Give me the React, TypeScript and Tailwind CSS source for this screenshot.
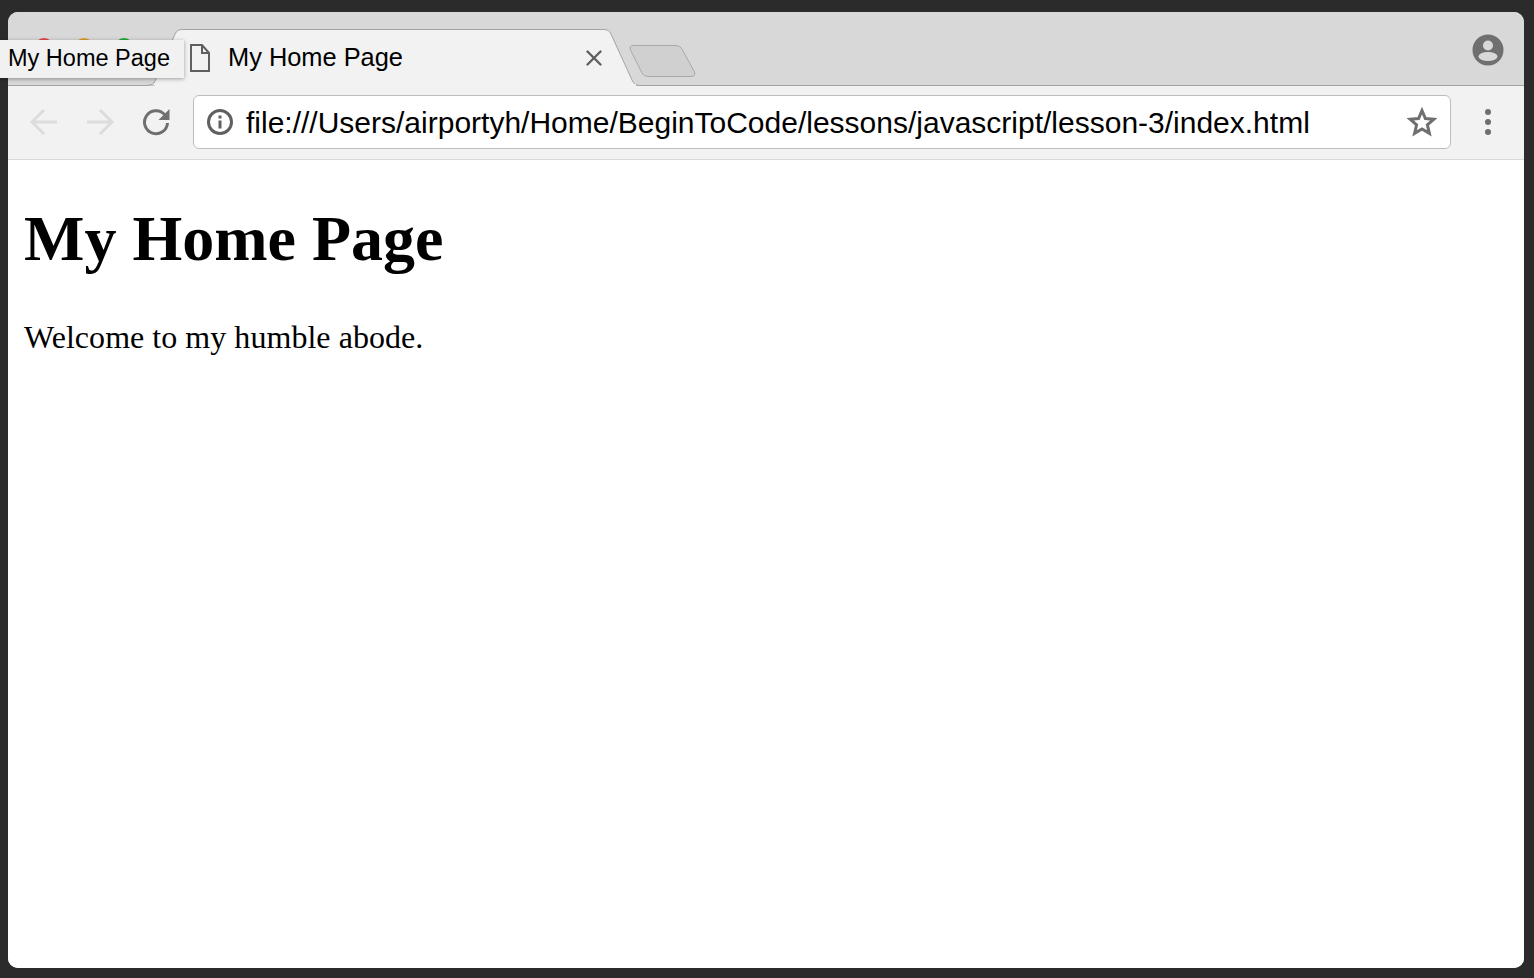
import { X } from "lucide-react";

function TabShape() {
  return (
    <svg className="absolute left-[131px] top-[0px]" width="520" height="74" viewBox="0 0 520 74">
      <path
        d="M8 73.5 L13 72.5 Q15 72 16 69 L36 22 Q38 17.5 43 17.5 L465 17.5 Q470 17.5 472 22 L493 68 Q495 73.5 501 73.5"
        fill="#f2f2f2"
        stroke="#a3a3a3"
        strokeWidth="1"
      />
      <path d="M16 74 L497 74 L497 72 L16 72 Z" fill="#f2f2f2" />
    </svg>
  );
}

function NewTabShape() {
  return (
    <svg className="absolute left-[620px] top-[32px]" width="70" height="34" viewBox="0 0 70 34">
      <path
        d="M5 1.5 L48 1.5 Q52 1.5 54 5 L66.5 28 Q68 32.5 63 32.5 L20 32.5 Q16 32.5 14 29 L2.5 6 Q1 1.5 5 1.5 Z"
        fill="#d0d0d0"
        stroke="#a8a8a8"
        strokeWidth="1"
      />
    </svg>
  );
}

function FileIcon() {
  return (
    <svg width="20" height="28" viewBox="0 0 20 28" fill="none" stroke="#5f5f5f" strokeWidth="2">
      <path d="M1 1 H12 L19 9 V27 H1 Z" />
      <path d="M12 1 V9 H19" />
    </svg>
  );
}

function ProfileIcon() {
  return (
    <svg width="32" height="32" viewBox="0 0 32 32">
      <circle cx="16" cy="16" r="15.5" fill="#6f6f6f" />
      <circle cx="16" cy="11.5" r="5" fill="#d8d8d8" />
      <ellipse cx="16" cy="22.5" rx="9.5" ry="4.5" fill="#d8d8d8" />
    </svg>
  );
}

function BackIcon() {
  return (
    <svg className="shrink-0" width="28" height="28" viewBox="0 0 28 28" fill="none" stroke="#dcdcdc" strokeWidth="3">
      <path d="M27 14 H3" />
      <path d="M14 2 L2 14 L14 26" />
    </svg>
  );
}

function ForwardIcon() {
  return (
    <svg className="shrink-0" width="28" height="28" viewBox="0 0 28 28" fill="none" stroke="#dcdcdc" strokeWidth="3">
      <path d="M1 14 H25" />
      <path d="M14 2 L26 14 L14 26" />
    </svg>
  );
}

function ReloadIcon() {
  return (
    <svg className="shrink-0" width="28" height="28" viewBox="0 0 28 28" fill="none">
      <path d="M22.5 6.5 A11.5 11.5 0 1 0 25.5 15" stroke="#6f6f6f" strokeWidth="3" />
      <path d="M27.5 1 V12 H16.5 Z" fill="#6f6f6f" />
    </svg>
  );
}

function InfoIcon() {
  return (
    <svg className="shrink-0" width="28" height="28" viewBox="0 0 28 28" fill="none">
      <circle cx="14" cy="14" r="11.5" stroke="#606060" strokeWidth="3" />
      <rect x="12.5" y="7.5" width="3" height="3" fill="#606060" />
      <rect x="12.5" y="12.5" width="3" height="8" fill="#606060" />
    </svg>
  );
}

function StarIcon() {
  return (
    <svg className="shrink-0" width="30" height="30" viewBox="0 0 30 30" fill="none">
      <path
        d="M15 3.5 L18.4 11.5 L27 12.2 L20.4 17.9 L22.4 26.3 L15 21.9 L7.6 26.3 L9.6 17.9 L3 12.2 L11.6 11.5 Z"
        stroke="#6f6f6f"
        strokeWidth="3"
      />
    </svg>
  );
}

export default function App() {
  return (
    <div className="relative h-[978px] w-[1534px] overflow-hidden bg-[#2b2b2b] pl-2 pr-[10px] pt-3 pb-[10px]">
      <div className="relative flex h-full flex-col overflow-hidden rounded-[10px] bg-white">
        {/* Tab strip */}
        <div className="relative h-[74px] shrink-0 border-b border-[#a3a3a3] bg-[#d8d8d8]">
          <div className="flex gap-[20px] pl-[26px] pt-[26px]">
            <span className="h-5 w-5 rounded-full bg-[#df4b45]" />
            <span className="h-5 w-5 rounded-full bg-[#dea030]" />
            <span className="h-5 w-5 rounded-full bg-[#25ab38]" />
          </div>
          <TabShape />
          <NewTabShape />
          <div className="absolute left-[182px] top-[32px] flex h-[28px] w-[418px] items-center">
            <FileIcon />
            <span className="ml-[18px] -translate-y-px font-['Liberation_Sans',sans-serif] text-[25.4px] leading-[28px] text-black">My Home Page</span>
            <X className="ml-auto mr-px text-[#5f5f5f]" size={26} strokeWidth={2.2} />
          </div>
          <div className="absolute right-5 top-[22px]">
            <ProfileIcon />
          </div>
        </div>

        {/* Toolbar */}
        <div className="flex h-[74px] shrink-0 items-center border-b border-[#d9d9d9] bg-[#f2f2f2] pb-[2px] pl-[22px]">
          <BackIcon />
          <div className="ml-7">
            <ForwardIcon />
          </div>
          <div className="ml-7">
            <ReloadIcon />
          </div>
          <div className="ml-[23px] flex h-[54px] w-[1258px] shrink-0 items-center rounded-[6px] border border-[#bdbdbd] bg-white pl-3 pr-[13px]">
            <InfoIcon />
            <span className="ml-3 translate-y-px whitespace-nowrap font-['Liberation_Sans',sans-serif] text-[30px] leading-[34px] text-black">
              file:///Users/airportyh/Home/BeginToCode/lessons/javascript/lesson-3/index.html
            </span>
            <div className="ml-auto">
              <StarIcon />
            </div>
          </div>
          <div className="ml-[34px] flex flex-col gap-[4px]">
            <span className="h-[6px] w-[6px] rounded-full bg-[#6f6f6f]" />
            <span className="h-[6px] w-[6px] rounded-full bg-[#6f6f6f]" />
            <span className="h-[6px] w-[6px] rounded-full bg-[#6f6f6f]" />
          </div>
        </div>

        {/* Page */}
        <div className="flex-1 bg-white px-4 pt-[42px] font-['Liberation_Serif',serif] text-black">
          <h1 className="text-[64px] font-bold leading-[74px]">My Home Page</h1>
          <p className="mt-[43px] text-[32px] leading-[37px] tracking-[0.04px]">Welcome to my humble abode.</p>
        </div>
      </div>

      {/* Tooltip hanging over the window edge */}
      <div className="absolute left-0 top-[40px] flex h-[38px] w-[184px] items-center bg-[#f1f1f1] pl-2 font-['Liberation_Sans',sans-serif] text-[23.5px] text-black shadow-[0_1px_4px_rgba(0,0,0,0.35)]">
        My Home Page
      </div>
    </div>
  );
}
